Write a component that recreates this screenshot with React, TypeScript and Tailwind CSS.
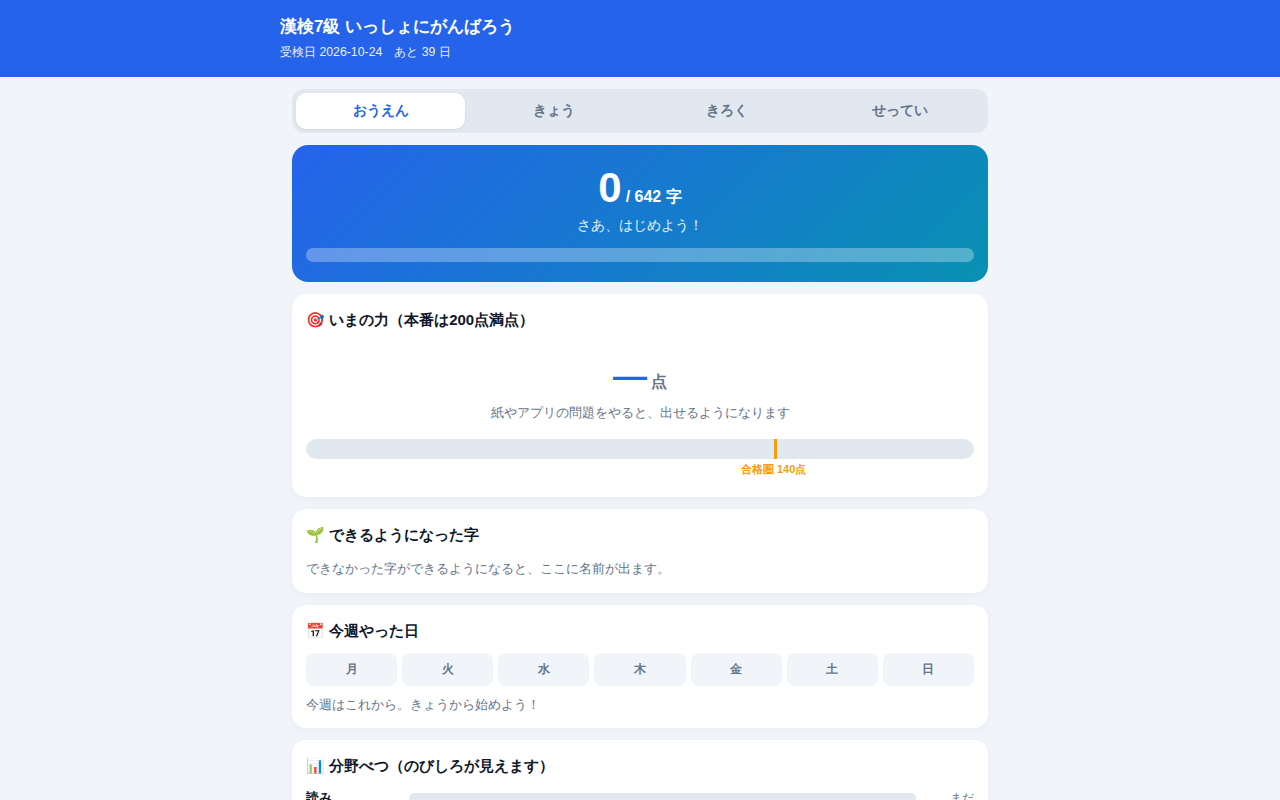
function Card({ children, className = "" }: { children: React.ReactNode; className?: string }) {
  return (
    <section className={"bg-white rounded-[14px] p-[14px] shadow-[0_2px_8px_rgba(15,23,42,0.04)] " + className}>
      {children}
    </section>
  );
}

function Title({ children }: { children: React.ReactNode }) {
  return <h2 className="text-[15px] leading-[24px] font-bold text-[#0f172a]">{children}</h2>;
}

export default function App() {
  const tabs = ["おうえん", "きょう", "きろく", "せってい"];
  const days = ["月", "火", "水", "木", "金", "土", "日"];
  return (
    <div className="h-[800px] overflow-hidden bg-[#f1f5f9] font-['Liberation_Sans',sans-serif]">
      <header className="h-[77px] bg-[#2563eb] text-white flex justify-center">
        <div className="w-[720px] pt-[15px]">
          <div className="text-[17px] leading-[24px] font-bold">漢検7級 いっしょにがんばろう</div>
          <div className="mt-[3px] text-[12.3px] leading-[20px] text-white/90 whitespace-pre">受検日 2026-10-24　あと 39 日</div>
        </div>
      </header>
      <main className="w-[696px] mx-auto pt-3 flex flex-col gap-3">
        <nav className="h-11 bg-[#e2e8f0] rounded-xl p-1 flex gap-1">
          {tabs.map((t, i) => (
            <div key={t} className={"flex-1 flex items-center justify-center pb-[2px] rounded-[10px] text-sm font-bold " + (i === 0 ? "bg-white text-[#2563eb] shadow-[0_1px_3px_rgba(0,0,0,0.08)]" : "text-[#64748b]")}>{t}</div>
          ))}
        </nav>
        <section className="h-[137px] rounded-2xl p-[14px] text-white bg-[linear-gradient(135deg,#2563eb,#0891b2)] text-center">
          <div className="h-[56px] flex items-baseline justify-center pt-[7px] gap-[4px]">
            <span className="text-[42px] leading-[44px] font-bold">0</span>
            <span className="text-[16px] font-bold">/ 642 字</span>
          </div>
          <div className="text-sm leading-[20px] text-white/90">さあ、はじめよう！</div>
          <div className="mt-[13px] h-[14px] rounded-full bg-white/30"></div>
        </section>
        <Card className="h-[203px]">
          <Title>🎯 いまの力（本番は200点満点）</Title>
          <div className="mt-[26px] h-[34px] flex items-end justify-center gap-1">
            <span className="text-[34px] leading-[34px] font-bold text-[#2563eb]">—</span>
            <span className="text-[16px] leading-[20px] font-bold text-[#64748b]">点</span>
          </div>
          <p className="mt-[11px] text-[13px] leading-[20px] text-[#64748b] text-center">紙やアプリの問題をやると、出せるようになります</p>
          <div className="mt-[16px] relative h-5 rounded-full bg-[#e2e8f0]">
            <div className="absolute left-[70%] top-0 w-[3px] h-5 bg-[#f59e0b]"></div>
            <div className="absolute left-[70%] top-[22px] -translate-x-1/2 text-[11px] leading-[17px] font-bold text-[#f59e0b] whitespace-nowrap">合格圏 140点</div>
          </div>
        </Card>
        <Card className="h-[84px]">
          <Title>🌱 できるようになった字</Title>
          <p className="mt-[12px] text-[13px] leading-[20px] text-[#64748b]">できなかった字ができるようになると、ここに名前が出ます。</p>
        </Card>
        <Card className="h-[123px]">
          <Title>📅 今週やった日</Title>
          <div className="mt-[10px] grid grid-cols-7 gap-[5px]">
            {days.map((d) => (
              <div key={d} className="h-[33px] pb-px rounded-lg bg-[#f1f5f9] flex items-center justify-center text-xs font-bold text-[#64748b]">{d}</div>
            ))}
          </div>
          <p className="mt-[9px] text-[13px] leading-[20px] text-[#64748b]">今週はこれから。きょうから始めよう！</p>
        </Card>
        <Card>
          <Title>📊 分野べつ（のびしろが見えます）</Title>
          <div className="mt-[8px] flex items-center gap-2 h-6">
            <div className="w-[95px] text-[13px] font-bold text-[#0f172a]">読み</div>
            <div className="flex-1 h-[10px] rounded-full bg-[#e2e8f0]"></div>
            <div className="w-[50px] text-right text-xs text-[#64748b]">まだ</div>
          </div>
        </Card>
      </main>
    </div>
  );
}
